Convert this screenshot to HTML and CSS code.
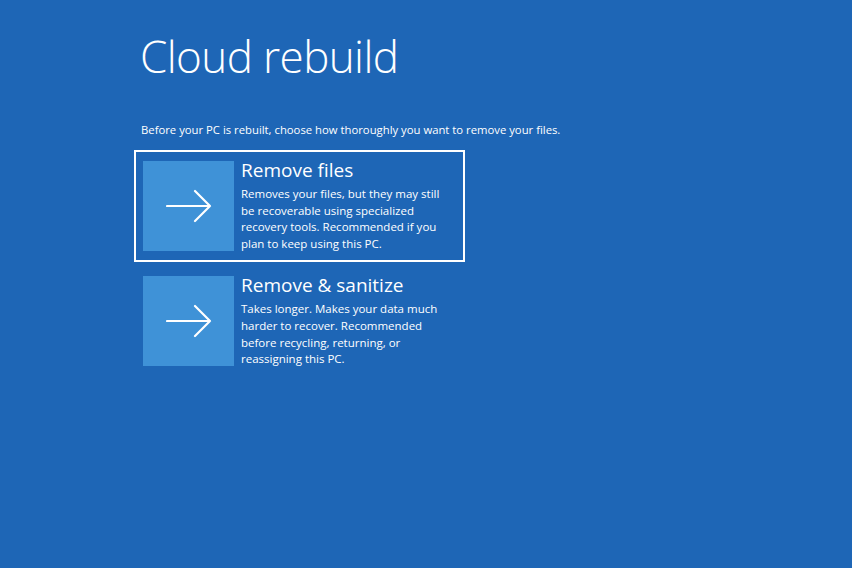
FILE: index.html
```html
<!DOCTYPE html>
<html lang="en">
<head>
<meta charset="utf-8">
<title>Cloud rebuild</title>
<link rel="stylesheet" href="styles.css">
</head>
<body>
<main class="page">
  <h1 class="title">Cloud rebuild</h1>
  <p class="intro">Before your PC is rebuilt, choose how thoroughly you want to remove your files.</p>
  <div class="options">
    <div class="option selected">
      <div class="tile">
        <svg class="arrow" width="46" height="34" viewBox="0 0 46 34"><path d="M1 17 H44 M29 2 L44 17 L29 32" fill="none" stroke="#fff" stroke-width="2.2" stroke-linecap="round" stroke-linejoin="round"/></svg>
      </div>
      <div class="text">
        <div class="opt-title">Remove files</div>
        <div class="opt-desc">Removes your files, but they may still be recoverable using specialized recovery tools. Recommended if you plan to keep using this PC.</div>
      </div>
    </div>
    <div class="option">
      <div class="tile">
        <svg class="arrow" width="46" height="34" viewBox="0 0 46 34"><path d="M1 17 H44 M29 2 L44 17 L29 32" fill="none" stroke="#fff" stroke-width="2.2" stroke-linecap="round" stroke-linejoin="round"/></svg>
      </div>
      <div class="text">
        <div class="opt-title">Remove &amp; sanitize</div>
        <div class="opt-desc">Takes longer. Makes your data much harder to recover. Recommended before recycling, returning, or reassigning this PC.</div>
      </div>
    </div>
  </div>
</main>
</body>
</html>
```
FILE: styles.css
```css
html, body {
  margin: 0;
  padding: 0;
  height: 100%;
}
body {
  background: #1e66b6;
  color: #fff;
  font-family: "Open Sans", "Noto Sans", sans-serif;
}
.page {
  padding: 24px 0 0 134px;
}
.title {
  margin: 0 0 0 6px;
  font-weight: 300;
  font-size: 44px;
  line-height: 64px;
  letter-spacing: -0.6px;
}
.intro {
  margin: 34px 0 0 7px;
  font-size: 11.3px;
  line-height: 16px;
}
.options {
  margin-top: 12px;
  display: flex;
  flex-direction: column;
  gap: 3px;
}
.option {
  width: 312px;
  display: flex;
  gap: 7px;
  padding: 9px 8px 8px 7px;
  border: 2px solid transparent;
}
.option.selected {
  border-color: #fff;
}
.tile {
  width: 91px;
  height: 90px;
  flex: none;
  background: #3f92d7;
  display: flex;
  align-items: center;
  justify-content: center;
}
.arrow {
  display: block;
}
.text {
  margin-top: -3px;
}
.opt-title {
  font-size: 19px;
  line-height: 24px;
  font-weight: 400;
}
.opt-desc {
  margin-top: 4px;
  font-size: 11.5px;
  line-height: 16.6px;
  width: 205px;
}
```
